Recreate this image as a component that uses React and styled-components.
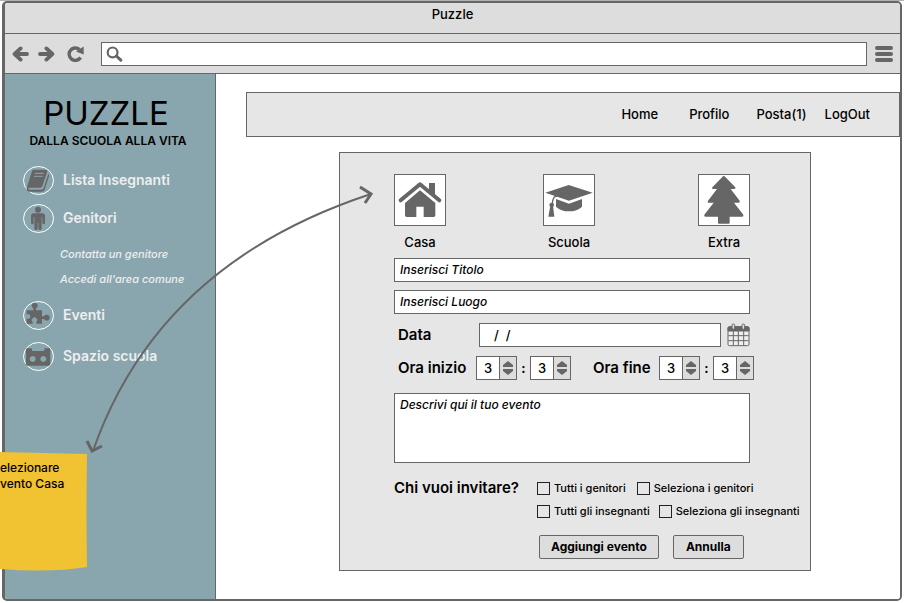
import React, { useState } from "react";
import styled, { createGlobalStyle } from "styled-components";

const ink = "#666666";

const GlobalStyle = createGlobalStyle`
  * { box-sizing: border-box; }
  body {
    margin: 0;
    background: #ffffff;
    color: #000000;
    font-family: Inter, "Open Sans", sans-serif;
    font-size: 13px;
    font-weight: 500;
    line-height: 16px;
    overflow: hidden;
  }
  #root { min-height: 100vh; }
  button, input, textarea { font: inherit; color: inherit; margin: 0; }
  button { padding: 0; cursor: pointer; }
  svg { display: block; }
`;

const Page = styled.div`
  position: relative;
  display: flex;
  min-height: 100vh;
  padding: 0 2px 2px;
  border-top: 1px solid #b3b3b3;
  overflow: hidden;
`;

const BrowserWindow = styled.div`
  flex: 1;
  display: flex;
  flex-direction: column;
  border: 2px solid ${ink};
  border-left-width: 3px;
  border-radius: 5px;
  overflow: hidden;
`;

const TitleBar = styled.header`
  height: 31px;
  padding-top: 3px;
  border-bottom: 1px solid ${ink};
  background: #dddddd;
  text-align: center;
`;

const Toolbar = styled.div`
  display: flex;
  align-items: center;
  height: 40px;
  padding: 0 7px;
  border-bottom: 1px solid ${ink};
  background: #dddddd;
`;

const ToolButton = styled.button`
  display: flex;
  align-items: center;
  justify-content: center;
  width: ${(p) => p.$width || 26}px;
  height: 24px;
  border: 0;
  background: transparent;
`;

const AddressBar = styled.label`
  flex: 1;
  display: flex;
  align-items: center;
  height: 24px;
  margin: 0 8px 0 14px;
  padding-left: 4px;
  border: 1px solid ${ink};
  background: #ffffff;
`;

const AddressInput = styled.input`
  flex: 1;
  min-width: 0;
  border: 0;
  outline: 0;
  background: transparent;
`;

const Columns = styled.div`
  flex: 1;
  display: flex;
`;

const Sidebar = styled.aside`
  flex: none;
  width: 211px;
  padding: 19px 0 0 18px;
  border-right: 1px solid ${ink};
  background: #89a6ae;
`;

const Brand = styled.h1`
  margin: 0 26px 0 0;
  font-size: 33px;
  font-weight: 400;
  line-height: 40px;
  text-align: center;
`;

const Tagline = styled.p`
  margin: 0 22px 16px 0;
  font-size: 12px;
  font-weight: 600;
  text-align: center;
  white-space: nowrap;
`;

const MenuLink = styled.a`
  display: flex;
  align-items: center;
  gap: 9px;
  height: 30px;
  margin-bottom: ${(p) => p.$after || 0}px;
  color: #eeeeee;
  font-size: 14px;
  font-weight: 600;
  text-decoration: none;
`;

const SubMenu = styled.div`
  display: flex;
  flex-direction: column;
  gap: 9px;
  margin: 0 0 13px 37px;
`;

const SubLink = styled.a`
  color: #eeeeee;
  font-size: 11px;
  font-style: italic;
  text-decoration: none;
`;

const Main = styled.main`
  flex: 1;
  min-width: 0;
  padding: 18px 0 28px 30px;
  background: #ffffff;
`;

const NavBar = styled.nav`
  display: flex;
  align-items: center;
  justify-content: flex-end;
  height: 45px;
  padding: 0 29px 2px 0;
  border: 1px solid ${ink};
  background: #e6e6e6;
`;

const NavLink = styled.a`
  margin-left: ${(p) => p.$before || 0}px;
  color: #000000;
  text-decoration: none;
`;

const EventForm = styled.form`
  max-width: 472px;
  margin: 15px 0 0 93px;
  padding: 21px 0 11px 54px;
  border: 1px solid ${ink};
  background: #e6e6e6;
`;

const Fields = styled.div`
  margin-right: 60px;
`;

const Tiles = styled.div`
  display: grid;
  grid-template-columns: 149fr 155fr 52px;
  margin-bottom: 8px;
`;

const Tile = styled.button`
  width: 52px;
  border: 0;
  background: transparent;
  text-align: center;
`;

const TileFace = styled.span`
  display: block;
  margin-bottom: 8px;
  border: 1px solid ${ink};
  background: #ffffff;
`;

const TextField = styled.input`
  display: block;
  width: 100%;
  height: 24px;
  margin-bottom: 8px;
  padding: 0 5px 2px;
  border: 1px solid ${ink};
  border-radius: 0;
  background: #ffffff;
  font-size: 12px;
  font-style: italic;
  &::placeholder { color: #000000; opacity: 1; }
`;

const FieldRow = styled.div`
  display: flex;
  align-items: center;
  padding-top: ${(p) => p.$before || 0}px;
  margin-bottom: ${(p) => p.$after}px;
`;

const FieldLabel = styled.label`
  flex: none;
  width: ${(p) => p.$width}px;
  padding-left: ${(p) => p.$indent || 4}px;
  font-size: 15px;
  font-weight: 600;
  white-space: nowrap;
`;

const DateInput = styled.input`
  flex: 1;
  min-width: 0;
  height: 24px;
  margin-right: 6px;
  padding: 0 0 0 14px;
  border: 1px solid ${ink};
  background: #ffffff;
`;

const CalendarButton = styled.button`
  width: 23px;
  height: 24px;
  border: 0;
  background: transparent;
`;

const StepperBox = styled.span`
  flex: none;
  display: flex;
  width: 41px;
  height: 24px;
  border: 1px solid ${ink};
  background: #dddddd;
`;

const StepperInput = styled.input`
  width: 23px;
  padding: 0;
  border: 0;
  border-right: 1px solid ${ink};
  background: #ffffff;
  text-align: center;
`;

const StepperArrows = styled.span`
  flex: 1;
  display: flex;
  flex-direction: column;
  justify-content: center;
  align-items: center;
  gap: 2px;
`;

const ArrowButton = styled.button`
  border: 0;
  background: transparent;
`;

const Colon = styled.span`
  flex: none;
  width: 13px;
  font-weight: 700;
  text-align: center;
`;

const Description = styled.textarea`
  display: block;
  width: 100%;
  height: 70px;
  margin-bottom: 17px;
  padding: 3px 5px;
  border: 1px solid ${ink};
  border-radius: 0;
  background: #ffffff;
  font-size: 12px;
  font-style: italic;
  resize: none;
  &::placeholder { color: #000000; opacity: 1; }
`;

const Invite = styled.fieldset`
  display: flex;
  margin: 0 0 16px;
  padding: 0;
  border: 0;
`;

const InviteTitle = styled.span`
  flex: none;
  width: 143px;
  font-size: 15px;
  font-weight: 600;
  white-space: nowrap;
`;

const CheckRow = styled.div`
  display: flex;
  gap: ${(p) => p.$gap}px;
  margin-bottom: ${(p) => p.$after || 0}px;
`;

const CheckLabel = styled.label`
  display: flex;
  align-items: center;
  gap: 4px;
  font-size: 11px;
  white-space: nowrap;
`;

const CheckBox = styled.input`
  appearance: none;
  flex: none;
  width: 13px;
  height: 13px;
  border: 1px solid #222222;
  &:checked { background: ${ink}; }
`;

const Actions = styled.div`
  display: flex;
  gap: 14px;
  margin-left: 145px;
`;

const ActionButton = styled.button`
  height: 24px;
  padding: 0 ${(p) => p.$pad}px;
  border: 1px solid ${ink};
  border-radius: 2px;
  background: #dddddd;
  font-size: 12px;
  font-weight: 700;
`;

const StickyNote = styled.div`
  position: absolute;
  left: 0;
  bottom: 32px;
  width: 88px;
  height: 119px;
`;

const NoteText = styled.p`
  position: absolute;
  inset: 8px 0 auto 0;
  margin: 0;
  font-size: 12px;
`;

const Connector = styled.svg`
  position: absolute;
  left: 80px;
  top: 174px;
  pointer-events: none;
`;

const Back = () => (
  <svg width="17" height="16" viewBox="0 0 17 16" fill="none" stroke={ink} strokeWidth="3.8" strokeLinejoin="round" strokeLinecap="round">
    <path d="M8.6 2.4 2.600 8l6 5.600M3.500 8H15" />
  </svg>
);
const Forward = () => (
  <svg width="17" height="16" viewBox="0 0 17 16" fill="none" stroke={ink} strokeWidth="3.8" strokeLinejoin="round" strokeLinecap="round">
    <path d="M8.4 2.4 14.400 8l-6 5.600M13.500 8H2" />
  </svg>
);
const Reload = () => (
  <svg width="17" height="16" viewBox="0 0 17 16">
    <path d="M13.600 11.500A6.200 6.200 0 1 1 12.500 3.600" fill="none" stroke={ink} strokeWidth="3.400" />
    <path d="M16.700 0.500V8.600L9 5.500z" fill={ink} />
  </svg>
);
const Search = () => (
  <svg width="17" height="16" viewBox="0 0 17 16" fill="none" stroke={ink}>
    <circle cx="6.600" cy="6.400" r="4.900" strokeWidth="2.200" />
    <path d="M10.400 10l4.400 4.200" strokeWidth="3" strokeLinecap="round" />
  </svg>
);
const Bars = () => (
  <svg width="18" height="16" viewBox="0 0 18 16" stroke={ink} strokeWidth="4" strokeLinecap="round">
    <path d="M2 2h14M2 8h14M2 14h14" />
  </svg>
);

const Badge = ({ children }) => (
  <svg width="31" height="29" viewBox="0 0 93 87" fill={ink}>
    <ellipse cx="46.500" cy="43.500" rx="45" ry="42" fill="none" stroke="#ffffff" strokeWidth="3" />
    {children}
  </svg>
);
const BookIcon = () => (
  <Badge>
    <path d="M33 11h36q5 0 4 5L58 61q-2 4-6 4H18q-5 4 0 6h38q4 0 6-5l14-42q3 2 2 6L65 71q-2 6-8 6H18q-8-1-7-10L27 15q2-4 6-4z" />
    <path d="M36 22h26M33 31h26" stroke="#89a6ae" strokeWidth="3" />
  </Badge>
);
const PersonIcon = () => (
  <Badge>
    <circle cx="45" cy="17" r="9" />
    <path d="M32 28h26q8 0 8 8v20q0 5-4 5t-4-5V40h-2v34q0 4-5 4t-5-4V56h-2v18q0 4-5 4t-5-4V40h-2v16q0 5-4 5t-4-5V36q0-8 8-8z" />
  </Badge>
);
const PuzzleIcon = () => (
  <Badge>
    <path d="M11 28H31V22A9 9 0 1 1 39 22V28H57V46H63A9 9 0 1 1 63 54H57V68H40V63A8 8 0 1 0 29 63V68H11V51A6 7 0 1 0 11 42Z" />
  </Badge>
);
const SchoolIcon = () => (
  <Badge>
    <path fillRule="evenodd" d="M9 23q0-4 4-4h11q3 0 3 3v5h37v-5q0-3 3-3h11q4 0 4 4v17q-3 3 0 6v20q0 5-5 5H14q-5 0-5-5V46q3-3 0-6zM29 42a9 9 0 1 0 .1 0zM61 42a9 9 0 1 0 .1 0z" />
  </Badge>
);

const TileIcon = ({ children }) => (
  <svg width="50" height="50" viewBox="3 3 150 150" fill={ink}>{children}</svg>
);
const HomeIcon = () => (
  <TileIcon>
    <path d="M78 49l46 38v37q0 5-5 5H89V98H67v31H38q-5 0-5-5V87z" />
    <path d="M105 27h18v36l-18-15z" />
    <path d="M20 79l58-48 58 48" fill="none" stroke={ink} strokeWidth="12" strokeLinecap="round" strokeLinejoin="round" />
  </TileIcon>
);
const CapIcon = () => (
  <TileIcon>
    <path d="M7 56L77 33l72 23-71 24z" />
    <path d="M39 75l39 14 39-14v23q-15 14-39 14T39 98z" />
    <path d="M78 57L36 68q-7 4-8 22" fill="none" stroke={ink} strokeWidth="4" />
    <circle cx="26" cy="93" r="7" />
    <path d="M22 96h8l4 32H16z" />
  </TileIcon>
);
const TreeIcon = () => (
  <TileIcon>
    <path d="M77 6q3 0 5 3l30 31q2 5-3 5H98l27 35q2 6-3 6h-14l28 36q2 6-4 6H95v18q0 3-3 3H63q-3 0-3-3v-18H23q-6 0-4-6l28-36H33q-6 0-3-6l27-35H46q-6 0-3-5L73 9q2-3 4-3z" />
  </TileIcon>
);
const CalendarIcon = () => (
  <svg width="23" height="24" viewBox="0 0 69 72" fill="none" stroke={ink} strokeWidth="3">
    <rect x="3" y="12" width="63" height="56" rx="4" fill="#eeeeee" />
    <path d="M3 24V15q0-4 4-4h55q4 0 4 4v9z" fill={ink} />
    <path d="M4 38h61M4 53h61M19 24v43M34 24v43M50 24v43" />
    <rect x="15" y="3" width="8" height="16" rx="4" fill="#dddddd" />
    <rect x="45" y="3" width="8" height="16" rx="4" fill="#dddddd" />
  </svg>
);

function Stepper({ label, id }) {
  const [value, setValue] = useState(3);
  return (
    <StepperBox>
      <StepperInput id={id} aria-label={label} value={value} onChange={(e) => setValue(Number(e.target.value) || 0)} />
      <StepperArrows>
        <ArrowButton type="button" aria-label={`${label} +`} onClick={() => setValue(value + 1)}>
          <svg width="10" height="6" viewBox="0 0 10 6"><path d="M5 0L10 4v2H0V4z" fill={ink} /></svg>
        </ArrowButton>
        <ArrowButton type="button" aria-label={`${label} -`} onClick={() => setValue(Math.max(0, value - 1))}>
          <svg width="10" height="6" viewBox="0 0 10 6"><path d="M5 6L10 2V0H0v2z" fill={ink} /></svg>
        </ArrowButton>
      </StepperArrows>
    </StepperBox>
  );
}

const Check = ({ children }) => (
  <CheckLabel><CheckBox type="checkbox" />{children}</CheckLabel>
);

export default function App() {
  return (
    <Page>
      <GlobalStyle />
      <BrowserWindow>
        <TitleBar>Puzzle</TitleBar>
        <Toolbar>
          <ToolButton aria-label="Indietro" $width={17}><Back /></ToolButton>
          <ToolButton aria-label="Avanti" $width={34}><Forward /></ToolButton>
          <ToolButton aria-label="Ricarica" $width={24}><Reload /></ToolButton>
          <AddressBar>
            <Search />
            <AddressInput type="text" aria-label="Indirizzo" />
          </AddressBar>
          <ToolButton aria-label="Menu" $width={18}><Bars /></ToolButton>
        </Toolbar>
        <Columns>
          <Sidebar>
            <Brand>PUZZLE</Brand>
            <Tagline>DALLA SCUOLA ALLA VITA</Tagline>
            <MenuLink href="#insegnanti" $after={8}><BookIcon />Lista Insegnanti</MenuLink>
            <MenuLink href="#genitori" $after={13}><PersonIcon />Genitori</MenuLink>
            <SubMenu>
              <SubLink href="#contatta">Contatta un genitore</SubLink>
              <SubLink href="#comune">Accedi all'area comune</SubLink>
            </SubMenu>
            <MenuLink href="#eventi" $after={11}><PuzzleIcon />Eventi</MenuLink>
            <MenuLink href="#spazio"><SchoolIcon />Spazio scuola</MenuLink>
          </Sidebar>
          <Main>
            <NavBar>
              <NavLink href="#home">Home</NavLink>
              <NavLink href="#profilo" $before={31}>Profilo</NavLink>
              <NavLink href="#posta" $before={27}>Posta(1)</NavLink>
              <NavLink href="#logout" $before={18}>LogOut</NavLink>
            </NavBar>
            <EventForm onSubmit={(e) => e.preventDefault()}>
              <Fields>
                <Tiles>
                  <Tile type="button"><TileFace><HomeIcon /></TileFace>Casa</Tile>
                  <Tile type="button"><TileFace><CapIcon /></TileFace>Scuola</Tile>
                  <Tile type="button"><TileFace><TreeIcon /></TileFace>Extra</Tile>
                </Tiles>
                <TextField type="text" aria-label="Titolo" placeholder="Inserisci Titolo" />
                <TextField type="text" aria-label="Luogo" placeholder="Inserisci Luogo" />
                <FieldRow $before={1} $after={9}>
                  <FieldLabel htmlFor="data" $width={85}>Data</FieldLabel>
                  <DateInput id="data" type="text" defaultValue="/  /" />
                  <CalendarButton type="button" aria-label="Calendario"><CalendarIcon /></CalendarButton>
                </FieldRow>
                <FieldRow $after={13}>
                  <FieldLabel htmlFor="inizio" $width={82}>Ora inizio</FieldLabel>
                  <Stepper id="inizio" label="Ora inizio" />
                  <Colon>:</Colon>
                  <Stepper label="Minuti inizio" />
                  <FieldLabel htmlFor="fine" $width={88} $indent={22}>Ora fine</FieldLabel>
                  <Stepper id="fine" label="Ora fine" />
                  <Colon>:</Colon>
                  <Stepper label="Minuti fine" />
                </FieldRow>
                <Description aria-label="Descrizione" placeholder="Descrivi qui il tuo evento" />
              </Fields>
              <Invite aria-labelledby="invite">
                <InviteTitle id="invite">Chi vuoi invitare?</InviteTitle>
                <div>
                  <CheckRow $gap={11} $after={7}>
                    <Check>Tutti i genitori</Check>
                    <Check>Seleziona i genitori</Check>
                  </CheckRow>
                  <CheckRow $gap={9}>
                    <Check>Tutti gli insegnanti</Check>
                    <Check>Seleziona gli insegnanti</Check>
                  </CheckRow>
                </div>
              </Invite>
              <Actions>
                <ActionButton type="submit" $pad={11}>Aggiungi evento</ActionButton>
                <ActionButton type="button" $pad={12}>Annulla</ActionButton>
              </Actions>
            </EventForm>
          </Main>
        </Columns>
      </BrowserWindow>
      <StickyNote>
        <svg width="88" height="119" viewBox="0 0 88 119">
          <path d="M0 0l87 2q-1 58 0 113Q50 121 0 117z" fill="#f1c232" />
        </svg>
        <NoteText>elezionare<br />vento Casa</NoteText>
      </StickyNote>
      <Connector width="300" height="285" viewBox="80 175 300 285" fill="none" stroke={ink} strokeWidth="2">
        <path d="M93 451Q158 264 371 194" />
        <path d="M360 187l11 7-6 9M87 441l5 10 10-5" strokeWidth="3" />
      </Connector>
    </Page>
  );
}
